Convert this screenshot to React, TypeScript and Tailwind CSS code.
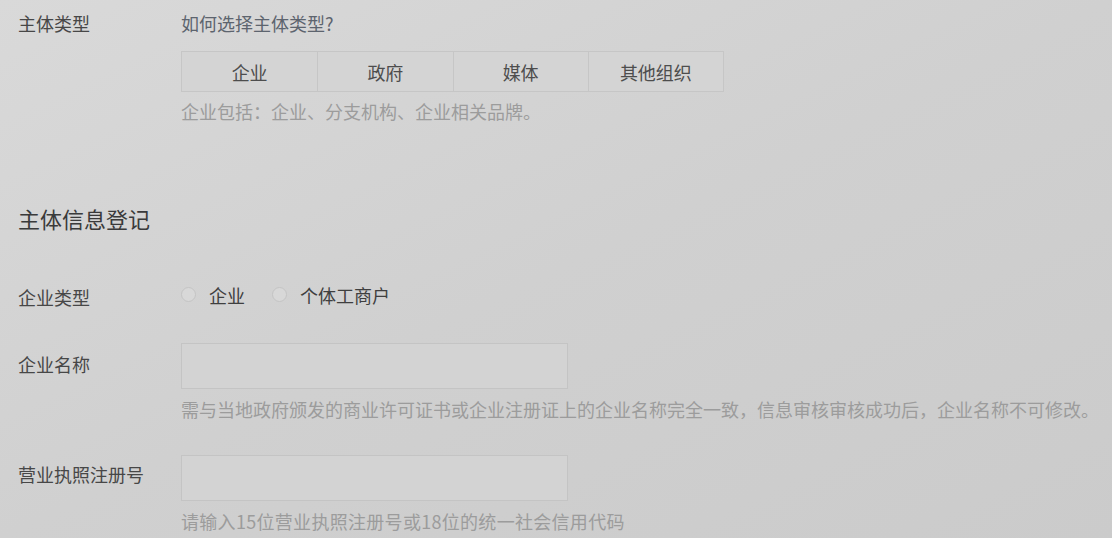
import React from 'react';

const FONT = '"Noto Sans CJK SC", "Noto Sans", "Liberation Sans", sans-serif';

const tabs = ['企业', '政府', '媒体', '其他组织'];

function Radio({ label }: { label: string }) {
  return (
    <label className="flex items-center">
      <span className="w-[15px] h-[15px] rounded-full border border-[#c4c4c4] bg-[#d8d8d8]" />
      <span className="ml-[13px] text-[#3f3f3f]">{label}</span>
    </label>
  );
}

export default function App() {
  return (
    <div
      className="w-[1112px] h-[538px] overflow-hidden bg-gradient-to-br from-[#d9d9d9] via-[#d0d0d0] to-[#cbcbcb] text-[18px] leading-[24px]"
      style={{ fontFamily: FONT }}
    >
      <div className="pl-[18px]">
        {/* 主体类型 */}
        <div className="flex pt-[11px]">
          <div className="w-[163px] text-[#474747]">主体类型</div>
          <div>
            <div className="text-[#5d646e]">如何选择主体类型?</div>
            <div className="mt-[16px] grid grid-cols-4 w-[543px] h-[41px] border border-[#c6c6c6] bg-[#d4d4d4]">
              {tabs.map((t, i) => (
                <div
                  key={t}
                  className={`flex items-center justify-center text-[#4d4d4d] ${i > 0 ? 'border-l border-[#c6c6c6]' : ''}`}
                >
                  {t}
                </div>
              ))}
            </div>
            <div className="mt-[7px] text-[#9c9c9c]">企业包括：企业、分支机构、企业相关品牌。</div>
          </div>
        </div>

        {/* 主体信息登记 */}
        <div className="mt-[80px] text-[22px] leading-[30px] text-[#3a3a3a]">主体信息登记</div>

        {/* 企业类型 */}
        <div className="flex mt-[52px]">
          <div className="w-[163px] text-[#474747]">企业类型</div>
          <div className="flex items-center gap-[27px] -mt-[5px]">
            <Radio label="企业" />
            <Radio label="个体工商户" />
          </div>
        </div>

        {/* 企业名称 */}
        <div className="flex mt-[34px]">
          <div className="w-[163px] pt-[9px] text-[#474747]">企业名称</div>
          <div>
            <div className="w-[387px] h-[46px] border border-[#c4c4c4] bg-[#d3d3d3]" />
            <div className="mt-[8px] text-[#9c9c9c] whitespace-nowrap">
              需与当地政府颁发的商业许可证书或企业注册证上的企业名称完全一致，信息审核审核成功后，企业名称不可修改。
            </div>
          </div>
        </div>

        {/* 营业执照注册号 */}
        <div className="flex mt-[34px]">
          <div className="w-[163px] pt-[7px] text-[#474747]">营业执照注册号</div>
          <div>
            <div className="w-[387px] h-[46px] border border-[#c4c4c4] bg-[#d3d3d3]" />
            <div className="mt-[8px] text-[#9c9c9c] whitespace-nowrap tracking-[0.3px]">
              请输入15位营业执照注册号或18位的统一社会信用代码
            </div>
          </div>
        </div>
      </div>
    </div>
  );
}
